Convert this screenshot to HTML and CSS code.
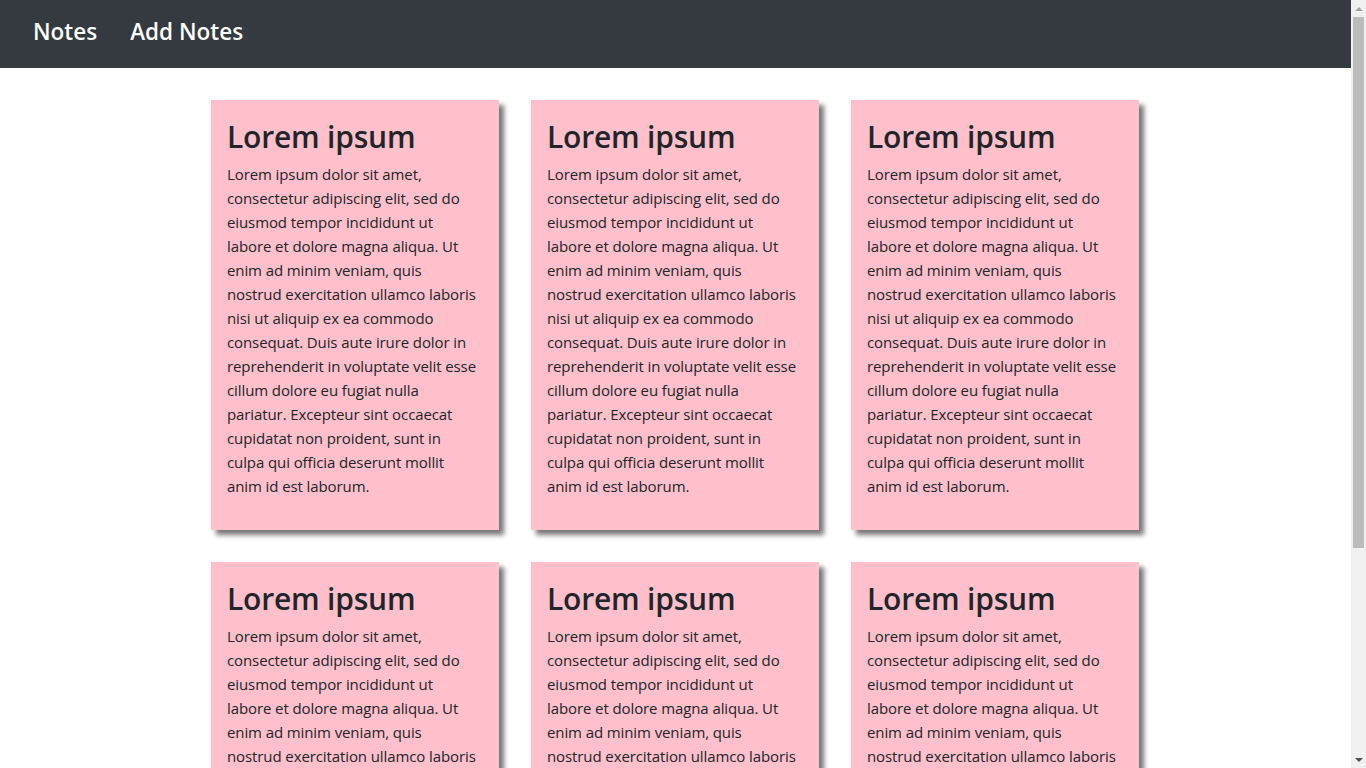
FILE: index.html
```html
<!DOCTYPE html>
<html lang="en">
<head>
<meta charset="utf-8">
<title>Notes</title>
<link rel="stylesheet" href="styles.css">
</head>
<body>
<div class="page">
  <nav class="navbar">
    <a class="nav-link" href="#">Notes</a>
    <a class="nav-link" href="#">Add Notes</a>
  </nav>
  <main class="notes">
    <div class="note"><h2 class="note-title">Lorem ipsum</h2><p class="note-text">Lorem ipsum dolor sit amet,<br>consectetur adipiscing elit, sed do<br>eiusmod tempor incididunt ut<br>labore et dolore magna aliqua. Ut<br>enim ad minim veniam, quis<br>nostrud exercitation ullamco laboris<br>nisi ut aliquip ex ea commodo<br>consequat. Duis aute irure dolor in<br>reprehenderit in voluptate velit esse<br>cillum dolore eu fugiat nulla<br>pariatur. Excepteur sint occaecat<br>cupidatat non proident, sunt in<br>culpa qui officia deserunt mollit<br>anim id est laborum.</p></div>
    <div class="note"><h2 class="note-title">Lorem ipsum</h2><p class="note-text">Lorem ipsum dolor sit amet,<br>consectetur adipiscing elit, sed do<br>eiusmod tempor incididunt ut<br>labore et dolore magna aliqua. Ut<br>enim ad minim veniam, quis<br>nostrud exercitation ullamco laboris<br>nisi ut aliquip ex ea commodo<br>consequat. Duis aute irure dolor in<br>reprehenderit in voluptate velit esse<br>cillum dolore eu fugiat nulla<br>pariatur. Excepteur sint occaecat<br>cupidatat non proident, sunt in<br>culpa qui officia deserunt mollit<br>anim id est laborum.</p></div>
    <div class="note"><h2 class="note-title">Lorem ipsum</h2><p class="note-text">Lorem ipsum dolor sit amet,<br>consectetur adipiscing elit, sed do<br>eiusmod tempor incididunt ut<br>labore et dolore magna aliqua. Ut<br>enim ad minim veniam, quis<br>nostrud exercitation ullamco laboris<br>nisi ut aliquip ex ea commodo<br>consequat. Duis aute irure dolor in<br>reprehenderit in voluptate velit esse<br>cillum dolore eu fugiat nulla<br>pariatur. Excepteur sint occaecat<br>cupidatat non proident, sunt in<br>culpa qui officia deserunt mollit<br>anim id est laborum.</p></div>
    <div class="note"><h2 class="note-title">Lorem ipsum</h2><p class="note-text">Lorem ipsum dolor sit amet,<br>consectetur adipiscing elit, sed do<br>eiusmod tempor incididunt ut<br>labore et dolore magna aliqua. Ut<br>enim ad minim veniam, quis<br>nostrud exercitation ullamco laboris<br>nisi ut aliquip ex ea commodo<br>consequat. Duis aute irure dolor in<br>reprehenderit in voluptate velit esse<br>cillum dolore eu fugiat nulla<br>pariatur. Excepteur sint occaecat<br>cupidatat non proident, sunt in<br>culpa qui officia deserunt mollit<br>anim id est laborum.</p></div>
    <div class="note"><h2 class="note-title">Lorem ipsum</h2><p class="note-text">Lorem ipsum dolor sit amet,<br>consectetur adipiscing elit, sed do<br>eiusmod tempor incididunt ut<br>labore et dolore magna aliqua. Ut<br>enim ad minim veniam, quis<br>nostrud exercitation ullamco laboris<br>nisi ut aliquip ex ea commodo<br>consequat. Duis aute irure dolor in<br>reprehenderit in voluptate velit esse<br>cillum dolore eu fugiat nulla<br>pariatur. Excepteur sint occaecat<br>cupidatat non proident, sunt in<br>culpa qui officia deserunt mollit<br>anim id est laborum.</p></div>
    <div class="note"><h2 class="note-title">Lorem ipsum</h2><p class="note-text">Lorem ipsum dolor sit amet,<br>consectetur adipiscing elit, sed do<br>eiusmod tempor incididunt ut<br>labore et dolore magna aliqua. Ut<br>enim ad minim veniam, quis<br>nostrud exercitation ullamco laboris<br>nisi ut aliquip ex ea commodo<br>consequat. Duis aute irure dolor in<br>reprehenderit in voluptate velit esse<br>cillum dolore eu fugiat nulla<br>pariatur. Excepteur sint occaecat<br>cupidatat non proident, sunt in<br>culpa qui officia deserunt mollit<br>anim id est laborum.</p></div>
  </main>
</div>
<div class="scrollbar" aria-hidden="true">
  <div class="sb-btn"><span class="sb-arrow-up"></span></div>
  <div class="sb-track"><div class="sb-thumb"></div></div>
  <div class="sb-btn"><span class="sb-arrow-down"></span></div>
</div>
</body>
</html>
```

FILE: styles.css
```css
html, body {
  margin: 0;
  padding: 0;
}
body {
  font-family: "Open Sans", "Noto Sans", sans-serif;
  color: #212529;
  background: #fff;
  display: flex;
  height: 100vh;
  overflow: hidden;
}
.page {
  flex: 1;
  min-width: 0;
  overflow: hidden;
}
.navbar {
  height: 68px;
  background: #343a40;
  display: flex;
  align-items: center;
  gap: 33px;
  padding: 0 33px 5px;
  box-sizing: border-box;
}
.nav-link {
  color: #fff;
  text-decoration: none;
  font-size: 22.5px;
  font-weight: 600;
}
.notes {
  display: grid;
  grid-template-columns: repeat(3, 288px);
  gap: 32px;
  justify-content: center;
  padding: 32px 1px 70px 0;
}
.note {
  background: #ffc0cb;
  box-shadow: 5px 5px 5px #777;
  padding: 16px 16px 32px;
}
.note-title {
  margin: 2px 0 6px;
  font-size: 30px;
  font-weight: 600;
  line-height: 38px;
  letter-spacing: -0.2px;
}
.note-text {
  margin: 0;
  font-size: 15px;
  line-height: 24px;
  letter-spacing: -0.1px;
  white-space: nowrap;
}
.scrollbar {
  width: 15px;
  flex: none;
  background: #f0f0f0;
  display: flex;
  flex-direction: column;
}
.sb-btn {
  height: 17px;
  display: flex;
  align-items: center;
  justify-content: center;
}
.sb-arrow-up {
  width: 0;
  height: 0;
  border-left: 4px solid transparent;
  border-right: 4px solid transparent;
  border-bottom: 4px solid #a3a3a3;
}
.sb-arrow-down {
  width: 0;
  height: 0;
  border-left: 4px solid transparent;
  border-right: 4px solid transparent;
  border-top: 4px solid #505050;
}
.sb-track {
  flex: 1;
  padding: 0 2px;
}
.sb-thumb {
  height: 531px;
  background: #bcbcbc;
}
```
